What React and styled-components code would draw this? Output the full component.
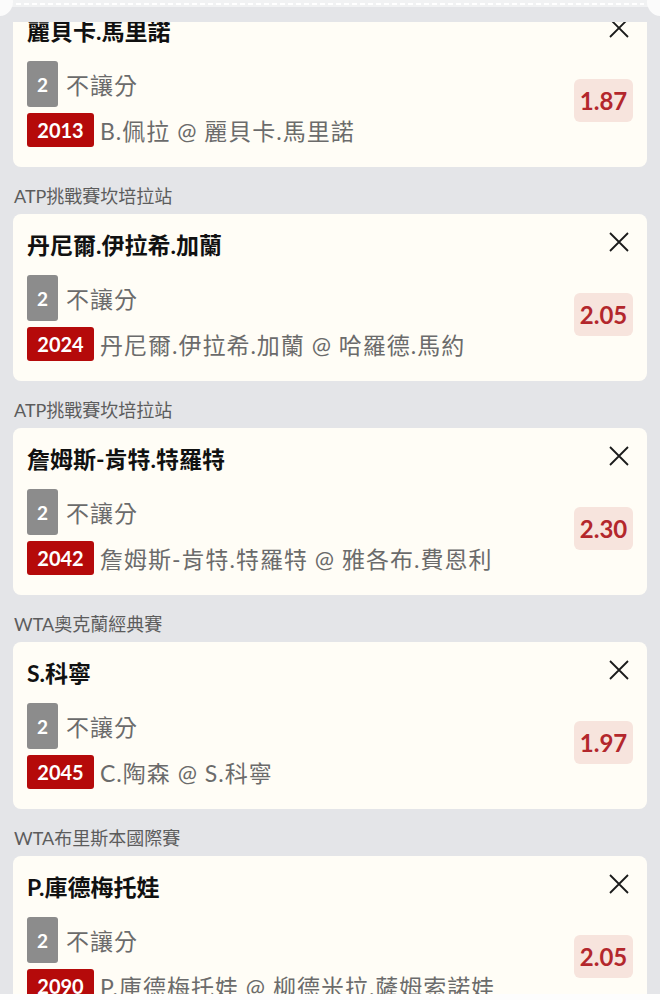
import React, { useLayoutEffect, useRef } from "react";
import styled, { createGlobalStyle } from "styled-components";

const GlobalStyle = createGlobalStyle`
  html, body {
    margin: 0;
    padding: 0;
    background: #e4e5e8;
  }
  body {
    font-family: Lato, "Noto Sans CJK TC", "Noto Sans", sans-serif;
  }
`;

const Page = styled.div`
  width: 660px;
  height: 1000px;
  display: flex;
  flex-direction: column;
  background: #e4e5e8;
  overflow: hidden;
`;

const TicketEdge = styled.div`
  position: relative;
  height: 22px;
  flex: none;
  background: #e4e5e8;
  overflow: hidden;
`;

const EdgeStrip = styled.div`
  height: 7px;
  background: #f1f2f3;
  display: flex;
  align-items: center;
  padding: 0 16px;
`;

const Dashes = styled.div`
  flex: 1;
  height: 2px;
  background: repeating-linear-gradient(
    90deg,
    #ffffff 0 5px,
    transparent 5px 8px
  );
`;

const Notch = styled.span`
  position: absolute;
  top: -12px;
  ${(p) => (p.$side === "left" ? "left: -15px;" : "right: -15px;")}
  width: 28px;
  height: 28px;
  border-radius: 50%;
  background: #fbfbfb;
`;

const Viewport = styled.div`
  flex: 1;
  overflow: hidden;
`;

const List = styled.div`
  padding: 0 13px 20px;
`;

const GroupLabel = styled.div`
  padding: 16px 1px 5px;
  line-height: 26px;
  font-size: 18px;
  color: #5c5c5c;
`;

const Card = styled.div`
  background: #fffdf6;
  border-radius: 8px;
  padding: 15px 14px 20px;
`;

const CardHead = styled.div`
  display: flex;
  justify-content: space-between;
  align-items: center;
`;

const Title = styled.div`
  font-size: 23px;
  font-weight: 700;
  line-height: 32px;
  color: #111;
`;

const CloseButton = styled.button`
  border: 0;
  background: none;
  padding: 0;
  width: 20px;
  height: 20px;
  margin: -6px 4px 0 0;
  display: flex;
  cursor: pointer;
`;

const CardBody = styled.div`
  margin-top: 14px;
  display: flex;
  align-items: center;
  justify-content: space-between;
`;

const Lines = styled.div`
  display: flex;
  flex-direction: column;
  gap: 6px;
`;

const Line = styled.div`
  display: flex;
  align-items: center;
  gap: ${(p) => p.$gap}px;
  font-size: 23px;
  letter-spacing: 1px;
  color: #6b6b6b;
  white-space: nowrap;
`;

const SelBadge = styled.span`
  width: 31px;
  height: 46px;
  border-radius: 3px;
  background: #8c8c8c;
  color: #fff;
  font-size: 19px;
  font-weight: 700;
  letter-spacing: 0;
  display: flex;
  align-items: center;
  justify-content: center;
`;

const CodeBadge = styled.span`
  width: 67px;
  height: 34px;
  border-radius: 3px;
  background: #b50a0a;
  color: #fff;
  font-size: 20px;
  font-weight: 700;
  letter-spacing: 0;
  display: flex;
  align-items: center;
  justify-content: center;
`;

const Odds = styled.div`
  width: 59px;
  height: 43px;
  margin-bottom: 7px;
  border-radius: 6px;
  background: #f7e4dd;
  color: #b3272c;
  font-size: 24px;
  font-weight: 700;
  display: flex;
  align-items: center;
  justify-content: center;
`;

const Footer = styled.div`
  height: 6px;
  flex: none;
  background: #fdfdfd;
`;

const bets = [
  {
    league: null,
    pick: "麗貝卡.馬里諾",
    code: "2013",
    match: "B.佩拉 @ 麗貝卡.馬里諾",
    odds: "1.87",
  },
  {
    league: "ATP挑戰賽坎培拉站",
    pick: "丹尼爾.伊拉希.加蘭",
    code: "2024",
    match: "丹尼爾.伊拉希.加蘭 @ 哈羅德.馬約",
    odds: "2.05",
  },
  {
    league: "ATP挑戰賽坎培拉站",
    pick: "詹姆斯-肯特.特羅特",
    code: "2042",
    match: "詹姆斯-肯特.特羅特 @ 雅各布.費恩利",
    odds: "2.30",
  },
  {
    league: "WTA奧克蘭經典賽",
    pick: "S.科寧",
    code: "2045",
    match: "C.陶森 @ S.科寧",
    odds: "1.97",
  },
  {
    league: "WTA布里斯本國際賽",
    pick: "P.庫德梅托娃",
    code: "2090",
    match: "P.庫德梅托娃 @ 柳德米拉.薩姆索諾娃",
    odds: "2.05",
  },
];

function CloseIcon() {
  return (
    <svg width="20" height="20" viewBox="0 0 20 20">
      <path
        d="M1 1 L19 19 M19 1 L1 19"
        stroke="#1a1a1a"
        strokeWidth="1.8"
        fill="none"
      />
    </svg>
  );
}

function BetCard({ bet }) {
  return (
    <Card>
      <CardHead>
        <Title>{bet.pick}</Title>
        <CloseButton aria-label="remove">
          <CloseIcon />
        </CloseButton>
      </CardHead>
      <CardBody>
        <Lines>
          <Line $gap={8}>
            <SelBadge>2</SelBadge>
            不讓分
          </Line>
          <Line $gap={6}>
            <CodeBadge>{bet.code}</CodeBadge>
            {bet.match}
          </Line>
        </Lines>
        <Odds>{bet.odds}</Odds>
      </CardBody>
    </Card>
  );
}

export default function App() {
  const viewportRef = useRef(null);

  // the slip is shown already scrolled a little past its top
  useLayoutEffect(() => {
    if (viewportRef.current) viewportRef.current.scrollTop = 22;
  }, []);

  return (
    <Page>
      <GlobalStyle />
      <TicketEdge>
        <EdgeStrip>
          <Dashes />
        </EdgeStrip>
        <Notch $side="left" />
        <Notch $side="right" />
      </TicketEdge>
      <Viewport ref={viewportRef}>
        <List>
          {bets.map((bet, i) => (
            <div key={i}>
              {bet.league && <GroupLabel>{bet.league}</GroupLabel>}
              <BetCard bet={bet} />
            </div>
          ))}
        </List>
      </Viewport>
      <Footer />
    </Page>
  );
}
